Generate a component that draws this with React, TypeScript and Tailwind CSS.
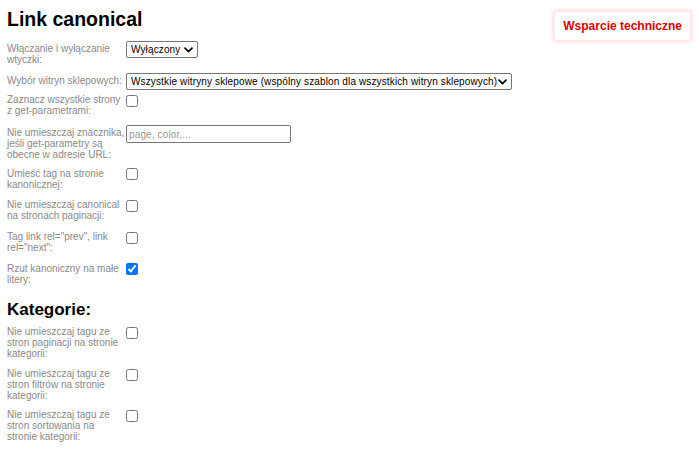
import React from 'react';

const Chevron = () => (
  <svg width="9" height="6" viewBox="0 0 9 6" className="pointer-events-none absolute top-1/2 -translate-y-1/2 right-[5px]">
    <path d="M1 1.2 L4.5 4.6 L8 1.2" fill="none" stroke="#000" strokeWidth="1.7" strokeLinecap="round" strokeLinejoin="round" />
  </svg>
);

const Label = ({ children, pt }: { children: React.ReactNode; pt: string }) => (
  <div className={`w-[119px] shrink-0 text-[10px] leading-[11px] text-[#8a8a8a] ${pt}`}>{children}</div>
);

const Check = ({ checked = false }: { checked?: boolean }) => (
  <input type="checkbox" defaultChecked={checked} className="m-0 mt-[1px] w-[12px] h-[12px]" />
);

const App: React.FC = () => {
  return (
    <div className="min-h-[452px] bg-white pl-[7px] pr-[9px] pt-[8px] font-['Liberation_Sans',Arial,sans-serif] text-black">
      {/* Header */}
      <div className="flex items-start justify-between">
        <h1 className="text-[19.5px] leading-[22px] font-bold">Link canonical</h1>
        <button className="mt-[3px] h-[30px] px-[8px] bg-white text-[12px] font-bold text-[#dd0000] border border-[#fcecec] shadow-[0_0_4px_rgba(230,0,0,0.25)]">
          Wsparcie techniczne
        </button>
      </div>

      {/* Plugin settings */}
      <div className="flex items-start">
        <Label pt="pt-[2px]">Włączanie i wyłączanie wtyczki:</Label>
        <div className="relative inline-flex">
          <select className="appearance-none w-[72px] h-[17px] border border-[#767676] rounded-[2px] bg-white pl-[4px] text-[10px] tracking-[0.13px] leading-[15px] text-black">
            <option>Wyłączony</option>
            <option>Włączony</option>
          </select>
          <Chevron />
        </div>
      </div>

      <div className="flex items-start mt-[8px]">
        <Label pt="pt-[2px]">Wybór witryn sklepowych:</Label>
        <div className="relative inline-flex">
          <select className="appearance-none w-[386px] h-[17px] border border-[#767676] rounded-[2px] bg-white pl-[4px] text-[10px] tracking-[0.13px] leading-[15px] text-black">
            <option>Wszystkie witryny sklepowe (wspólny szablon dla wszystkich witryn sklepowych)</option>
          </select>
          <Chevron />
        </div>
      </div>

      <div className="flex items-start mt-[4px]">
        <Label pt="pt-0">Zaznacz wszystkie strony z get-parametrami:</Label>
        <Check />
      </div>

      <div className="flex items-start mt-[9px]">
        <Label pt="pt-[2px]">Nie umieszczaj znacznika, jeśli get-parametry są obecne w adresie URL:</Label>
        <input
          type="text"
          placeholder="page, color,..."
          className="w-[165px] h-[18px] border border-[#767676] rounded-[2px] px-[2px] text-[10px] tracking-[0.13px] text-black placeholder:text-[#9a9a9a] outline-none"
        />
      </div>

      <div className="flex items-start mt-[7px]">
        <Label pt="pt-[1px]">Umieść tag na stronie kanonicznej:</Label>
        <Check />
      </div>

      <div className="flex items-start mt-[9px]">
        <Label pt="pt-0">Nie umieszczaj canonical na stronach paginacji:</Label>
        <Check />
      </div>

      <div className="flex items-start mt-[10px]">
        <Label pt="pt-0">Tag link rel="prev", link rel="next":</Label>
        <Check />
      </div>

      <div className="flex items-start mt-[9px]">
        <Label pt="pt-[1px]">Rzut kanoniczny na małe litery:</Label>
        <Check checked />
      </div>

      {/* Categories */}
      <h3 className="mt-[15px] text-[17px] leading-[20px] font-bold">Kategorie:</h3>

      <div className="flex items-start mt-[6px]">
        <Label pt="pt-0">Nie umieszczaj tagu ze stron paginacji na stronie kategorii:</Label>
        <Check />
      </div>

      <div className="flex items-start mt-[9px]">
        <Label pt="pt-0">Nie umieszczaj tagu ze stron filtrów na stronie kategorii:</Label>
        <Check />
      </div>

      <div className="flex items-start mt-[8px]">
        <Label pt="pt-0">Nie umieszczaj tagu ze stron sortowania na stronie kategorii:</Label>
        <Check />
      </div>
    </div>
  );
};

export default App;
